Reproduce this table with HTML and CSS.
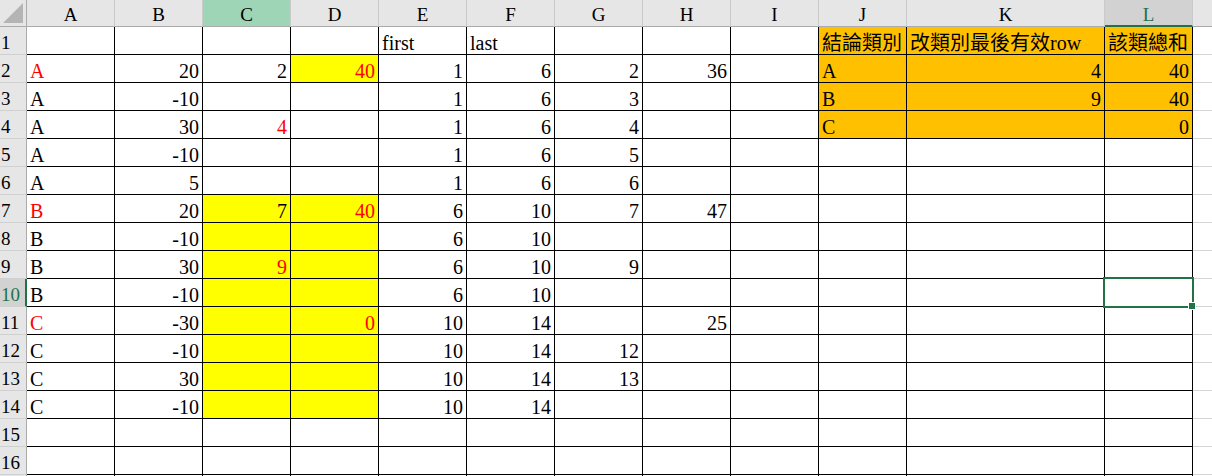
FILE: index.html
```html
<!DOCTYPE html>
<html lang="zh-Hant">
<head>
<meta charset="utf-8">
<title>Sheet</title>
<link rel="stylesheet" href="styles.css">
</head>
<body>
<div class="sheet">
  <div class="corner"><svg width="26" height="26" viewBox="0 0 26 26"><polygon points="23,3 23,23 3,23" fill="#b4b4b4"/></svg></div>
  <div class="ch">A</div><div class="ch">B</div><div class="ch ch-c">C</div><div class="ch">D</div><div class="ch">E</div><div class="ch">F</div><div class="ch">G</div><div class="ch">H</div><div class="ch">I</div><div class="ch">J</div><div class="ch">K</div><div class="ch ch-sel">L</div><div class="ch ch-m"></div>

  <div class="rh">1</div><div class="c"></div><div class="c"></div><div class="c"></div><div class="c"></div><div class="c">first</div><div class="c">last</div><div class="c"></div><div class="c"></div><div class="c"></div><div class="c o">結論類別</div><div class="c o">改類別最後有效row</div><div class="c o">該類總和</div><div class="m"></div>

  <div class="rh">2</div><div class="c red">A</div><div class="c r">20</div><div class="c r">2</div><div class="c r y red">40</div><div class="c r">1</div><div class="c r">6</div><div class="c r">2</div><div class="c r">36</div><div class="c"></div><div class="c o">A</div><div class="c r o">4</div><div class="c r o">40</div><div class="m"></div>

  <div class="rh">3</div><div class="c">A</div><div class="c r">-10</div><div class="c"></div><div class="c"></div><div class="c r">1</div><div class="c r">6</div><div class="c r">3</div><div class="c"></div><div class="c"></div><div class="c o">B</div><div class="c r o">9</div><div class="c r o">40</div><div class="m"></div>

  <div class="rh">4</div><div class="c">A</div><div class="c r">30</div><div class="c r red">4</div><div class="c"></div><div class="c r">1</div><div class="c r">6</div><div class="c r">4</div><div class="c"></div><div class="c"></div><div class="c o">C</div><div class="c r o"></div><div class="c r o">0</div><div class="m"></div>

  <div class="rh">5</div><div class="c">A</div><div class="c r">-10</div><div class="c"></div><div class="c"></div><div class="c r">1</div><div class="c r">6</div><div class="c r">5</div><div class="c"></div><div class="c"></div><div class="c"></div><div class="c"></div><div class="c"></div><div class="m"></div>

  <div class="rh">6</div><div class="c">A</div><div class="c r">5</div><div class="c"></div><div class="c"></div><div class="c r">1</div><div class="c r">6</div><div class="c r">6</div><div class="c"></div><div class="c"></div><div class="c"></div><div class="c"></div><div class="c"></div><div class="m"></div>

  <div class="rh">7</div><div class="c red">B</div><div class="c r">20</div><div class="c r y">7</div><div class="c r y red">40</div><div class="c r">6</div><div class="c r">10</div><div class="c r">7</div><div class="c r">47</div><div class="c"></div><div class="c"></div><div class="c"></div><div class="c"></div><div class="m"></div>

  <div class="rh">8</div><div class="c">B</div><div class="c r">-10</div><div class="c y"></div><div class="c y"></div><div class="c r">6</div><div class="c r">10</div><div class="c"></div><div class="c"></div><div class="c"></div><div class="c"></div><div class="c"></div><div class="c"></div><div class="m"></div>

  <div class="rh">9</div><div class="c">B</div><div class="c r">30</div><div class="c r y red">9</div><div class="c y"></div><div class="c r">6</div><div class="c r">10</div><div class="c r">9</div><div class="c"></div><div class="c"></div><div class="c"></div><div class="c"></div><div class="c"></div><div class="m"></div>

  <div class="rh rh-sel">10</div><div class="c">B</div><div class="c r">-10</div><div class="c y"></div><div class="c y"></div><div class="c r">6</div><div class="c r">10</div><div class="c"></div><div class="c"></div><div class="c"></div><div class="c"></div><div class="c"></div><div class="c active"><span class="selection"><span class="handle"></span></span></div><div class="m"></div>

  <div class="rh">11</div><div class="c red">C</div><div class="c r">-30</div><div class="c y"></div><div class="c r y red">0</div><div class="c r">10</div><div class="c r">14</div><div class="c"></div><div class="c r">25</div><div class="c"></div><div class="c"></div><div class="c"></div><div class="c"></div><div class="m"></div>

  <div class="rh">12</div><div class="c">C</div><div class="c r">-10</div><div class="c y"></div><div class="c y"></div><div class="c r">10</div><div class="c r">14</div><div class="c r">12</div><div class="c"></div><div class="c"></div><div class="c"></div><div class="c"></div><div class="c"></div><div class="m"></div>

  <div class="rh">13</div><div class="c">C</div><div class="c r">30</div><div class="c y"></div><div class="c y"></div><div class="c r">10</div><div class="c r">14</div><div class="c r">13</div><div class="c"></div><div class="c"></div><div class="c"></div><div class="c"></div><div class="c"></div><div class="m"></div>

  <div class="rh">14</div><div class="c">C</div><div class="c r">-10</div><div class="c y"></div><div class="c y"></div><div class="c r">10</div><div class="c r">14</div><div class="c"></div><div class="c"></div><div class="c"></div><div class="c"></div><div class="c"></div><div class="c"></div><div class="m"></div>

  <div class="rh">15</div><div class="c"></div><div class="c"></div><div class="c"></div><div class="c"></div><div class="c"></div><div class="c"></div><div class="c"></div><div class="c"></div><div class="c"></div><div class="c"></div><div class="c"></div><div class="c"></div><div class="m"></div>

  <div class="rh">16</div><div class="c"></div><div class="c"></div><div class="c"></div><div class="c"></div><div class="c"></div><div class="c"></div><div class="c"></div><div class="c"></div><div class="c"></div><div class="c"></div><div class="c"></div><div class="c"></div><div class="m"></div>

  <div class="rh"></div><div class="c"></div><div class="c"></div><div class="c"></div><div class="c"></div><div class="c"></div><div class="c"></div><div class="c"></div><div class="c"></div><div class="c"></div><div class="c"></div><div class="c"></div><div class="c"></div><div class="m"></div>
</div>
</body>
</html>
```

FILE: styles.css
```css
html, body {
  margin: 0;
  padding: 0;
  background: #ffffff;
  overflow: hidden;
}

.sheet {
  display: grid;
  grid-template-columns: 27px repeat(10, 88px) 198px 88px 1fr;
  grid-template-rows: 27px;
  grid-auto-rows: 28px;
  width: 1212px;
  font-family: "Liberation Serif", "Noto Sans CJK TC", serif;
  font-size: 20px;
  color: #000;
}

.sheet > div {
  box-sizing: border-box;
  white-space: nowrap;
  overflow: hidden;
}

.corner {
  background: #e6e6e6;
  border-right: 1px solid #ababab;
  border-bottom: 1px solid #ababab;
  line-height: 0;
}

.ch {
  background: #e6e6e6;
  border-right: 1px solid #cacaca;
  border-bottom: 1px solid #ababab;
  text-align: center;
  font-size: 19px;
  line-height: 20px;
  padding-top: 5px;
  color: #000;
}

.ch-c {
  background: #9fd5b7;
}

.ch-sel {
  background: #d2d2d2;
  color: #217346;
  border-bottom: 2px solid #217346;
}

.ch-m {
  border-right: none;
}

.rh {
  background: #e6e6e6;
  border-right: 1px solid #ababab;
  border-bottom: 1px solid #d0d0d0;
  font-size: 19px;
  line-height: 20px;
  padding-top: 6px;
  padding-left: 1px;
  color: #000;
}

.rh-sel {
  background: #d2d2d2;
  color: #217346;
  border-right: 2px solid #217346;
}

.c {
  border-right: 1px solid #000;
  border-bottom: 1px solid #000;
  line-height: 22px;
  padding: 5px 3px 0 3px;
}

.m {
  border-bottom: 1px solid #d4d4d4;
}

.r {
  text-align: right;
}

.y {
  background: #ffff00;
}

.o {
  background: #ffc000;
}

.red {
  color: #ff0000;
}

.sheet > .active {
  position: relative;
  overflow: visible;
}

.selection {
  position: absolute;
  top: -2px;
  left: -2px;
  right: -2px;
  bottom: -2px;
  border: 2px solid #217346;
}

.handle {
  position: absolute;
  left: 83px;
  top: 23px;
  width: 6px;
  height: 6px;
  background: #217346;
  border: 1px solid #ffffff;
}
```
